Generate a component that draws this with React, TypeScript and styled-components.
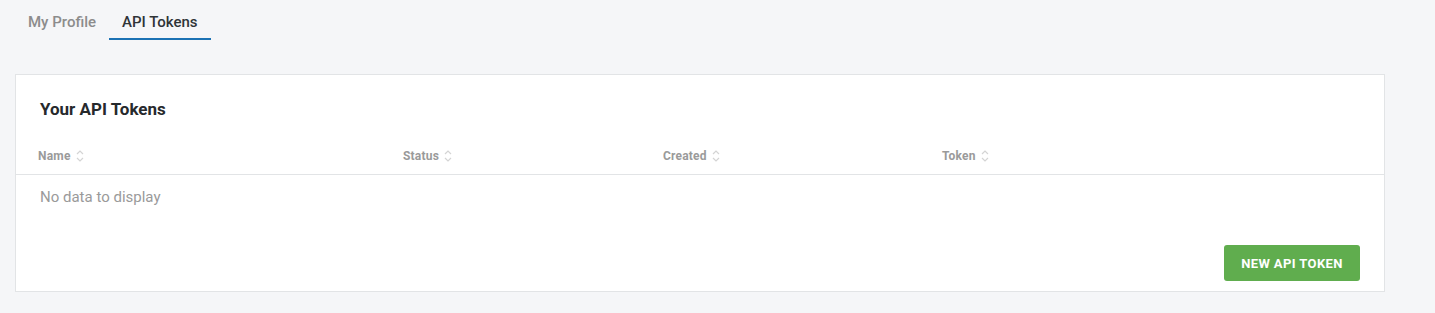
import React from "react";
import styled, { createGlobalStyle } from "styled-components";

const GlobalStyle = createGlobalStyle`
  html, body {
    margin: 0;
    padding: 0;
    background: #f5f6f8;
    font-family: Roboto, "Liberation Sans", Arial, sans-serif;
  }
`;

const Page = styled.div`
  padding: 0 50px 0 15px;
`;

const Tabs = styled.div`
  display: flex;
  height: 40px;
  margin-bottom: 34px;
`;

const Tab = styled.div<{ active?: boolean }>`
  padding: 0 13px;
  height: 40px;
  box-sizing: border-box;
  padding-top: 12px;
  font-size: 15px;
  font-weight: 500;
  line-height: 20px;
  color: ${(p) => (p.active ? "#2f3437" : "#8c8c8c")};
  border-bottom: 2px solid ${(p) => (p.active ? "#1c72b4" : "transparent")};
  cursor: pointer;
`;

const Card = styled.div`
  background: #fff;
  border: 1px solid #e2e4e6;
  padding-bottom: 10px;
`;

const Title = styled.h2`
  margin: 0;
  padding: 24px 24px 0;
  margin-bottom: 19px;
  font-size: 17px;
  line-height: 20px;
  font-weight: 700;
  color: #26292c;
`;

const Row = styled.div`
  display: grid;
  grid-template-columns: 365px 260px 279px 1fr;
  padding-left: 22px;
`;

const HeaderRow = styled(Row)`
  height: 36px;
  align-items: center;
  border-bottom: 1px solid #e2e4e6;
`;

const HeadCell = styled.div`
  display: flex;
  align-items: center;
  gap: 5px;
  font-size: 12px;
  letter-spacing: 0.2px;
  font-weight: 700;
  color: #9a9a9a;
`;

const Empty = styled.div`
  padding: 12px 24px 0;
  font-size: 15px;
  line-height: 20px;
  color: #9a9a9a;
`;

const Footer = styled.div`
  display: flex;
  justify-content: flex-end;
  padding: 38px 24px 0;
`;

const Button = styled.button`
  width: 136px;
  height: 36px;
  border: none;
  border-radius: 3px;
  background: #60ad4e;
  color: #fff;
  font-family: inherit;
  font-size: 13px;
  letter-spacing: 0.4px;
  font-weight: 700;
  text-transform: uppercase;
  cursor: pointer;
`;

const SortIcon = () => (
  <svg width="8" height="14" viewBox="0 0 8 14" fill="none" stroke="#d4d4d4" strokeWidth="1.2">
    <path d="M1 5l3-3 3 3" />
    <path d="M1 9l3 3 3-3" />
  </svg>
);

const columns = ["Name", "Status", "Created", "Token"];

export default function App() {
  return (
    <Page>
      <GlobalStyle />
      <Tabs>
        <Tab>My Profile</Tab>
        <Tab active>API Tokens</Tab>
      </Tabs>
      <Card>
        <Title>Your API Tokens</Title>
        <HeaderRow>
          {columns.map((c) => (
            <HeadCell key={c}>
              {c}
              <SortIcon />
            </HeadCell>
          ))}
        </HeaderRow>
        <Empty>No data to display</Empty>
        <Footer>
          <Button>New API Token</Button>
        </Footer>
      </Card>
    </Page>
  );
}
